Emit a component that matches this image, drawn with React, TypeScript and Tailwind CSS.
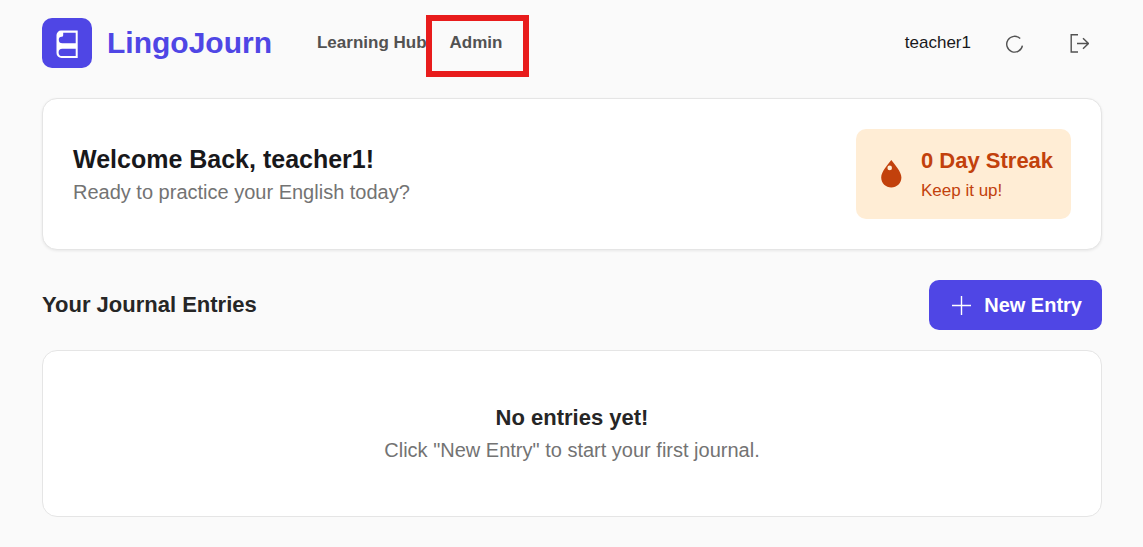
import React from "react";

function LogoIcon() {
  return (
    <svg viewBox="0 0 50 50" className="size-full" aria-hidden="true">
      <path
        fill="#fff"
        fillRule="evenodd"
        d="M19 12.6H35.7V40H19.5A5 5 0 0 1 14.5 35V17A4.5 4.5 0 0 1 19 12.6ZM21.2 14.8V17.2A1.6 1.6 0 0 1 19.6 18.8A3 3 0 0 0 16.8 21.8A3.5 3.5 0 0 0 20.3 25.3H33.7V14.8ZM20.3 30.7A3.7 3.7 0 0 0 20.3 38.1H33.7V30.7Z"
      />
    </svg>
  );
}

function DropIcon() {
  return (
    <svg viewBox="0 0 40 40" className="size-10 shrink-0" aria-hidden="true">
      <path
        fill="currentColor"
        fillRule="evenodd"
        d="M20.3 6C17 10.5 10.2 17.6 10.2 23.6C10.2 29.4 14.8 33.6 20.3 33.6S30.4 29.4 30.4 23.6C30.4 17.6 23.6 10.5 20.3 6ZM18.7 11.6A2.3 2.3 0 1 0 18.7 16.2A2.3 2.3 0 1 0 18.7 11.6Z"
      />
    </svg>
  );
}

function ThemeIcon() {
  return (
    <svg viewBox="0 0 20 20" className="size-5" fill="none" stroke="currentColor" strokeWidth="1.4" aria-hidden="true">
      <path d="M16.2 5.6A7.9 7.9 0 1 0 18.4 12.6" />
    </svg>
  );
}

function LogoutIcon() {
  return (
    <svg viewBox="0 0 20 20" className="size-5" fill="none" stroke="currentColor" strokeWidth="1.4" aria-hidden="true">
      <path d="M9 1.8H2.2V19H9M8 10.5H19.5M14 5.2L19.4 10.5L14 15.8" />
    </svg>
  );
}

function PlusIcon() {
  return (
    <svg viewBox="0 0 25 25" className="size-[25px]" fill="none" stroke="currentColor" strokeWidth="1.4" aria-hidden="true">
      <path d="M12.5 3V22M3 12.5H22" />
    </svg>
  );
}

export default function App() {
  return (
    <div className="min-h-screen bg-[#fafafa] pt-[18px] pr-[41px] pb-[30px] pl-[42px] font-['Liberation_Sans',Arial,sans-serif] text-[#18181b]">
      <header className="flex h-[50px] items-center justify-between">
        <div className="flex items-center">
          <a href="#home" className="flex items-center gap-[15px]">
            <span className="size-[50px] rounded-[10px] bg-[#4f46e5]">
              <LogoIcon />
            </span>
            <span className="text-[30px] leading-[38px] font-bold text-[#4f46e5]">LingoJourn</span>
          </a>
          <nav className="ml-[45px] flex items-center gap-[23px] text-[17px] leading-[24px] font-bold text-[#525252]">
            <a href="#hub">Learning Hub</a>
            <a href="#admin" className="relative">
              Admin
              <span className="pointer-events-none absolute -top-4 -right-[27px] -bottom-[22px] -left-6 border-6 border-[#e81c1c]" />
            </a>
          </nav>
        </div>
        <div className="flex items-center text-[17px] leading-[24px]">
          <span>teacher1</span>
          <div className="ml-[21px] flex gap-[21px] pr-px text-[#525252]">
            <button type="button" aria-label="Toggle theme" className="flex size-[44px] items-center justify-center">
              <ThemeIcon />
            </button>
            <button type="button" aria-label="Log out" className="flex size-[44px] items-center justify-center">
              <LogoutIcon />
            </button>
          </div>
        </div>
      </header>

      <main className="mt-[30px]">
        <section className="flex items-center justify-between rounded-[15px] border border-[#e5e5e5] bg-white p-[30px] shadow-[0_1px_3px_rgba(0,0,0,0.08)]">
          <div>
            <h1 className="text-[25px] leading-[35px] font-bold">Welcome Back, teacher1!</h1>
            <p className="text-[20px] leading-[30px] text-[#737373]">Ready to practice your English today?</p>
          </div>
          <div className="flex items-center gap-2.5 rounded-[10px] bg-[#ffedd5] p-[15px] text-[#c2410c]">
            <DropIcon />
            <div className="min-w-[135px]">
              <p className="text-[22px] leading-[34px] font-bold">0 Day Streak</p>
              <p className="text-[17px] leading-[26px]">Keep it up!</p>
            </div>
          </div>
        </section>

        <div className="mt-[30px] flex items-center justify-between">
          <h2 className="text-[22px] leading-[34px] font-bold text-[#262626]">Your Journal Entries</h2>
          <button type="button" className="flex h-[50px] items-center gap-2.5 rounded-[10px] bg-[#4f46e5] px-5 text-[20px] font-bold text-white">
            <PlusIcon />
            New Entry
          </button>
        </div>

        <section className="mt-5 rounded-[15px] border border-[#e5e5e5] bg-white px-[30px] pt-[50px] pb-[51px] text-center">
          <h3 className="text-[22px] leading-[34px] font-bold text-[#262626]">No entries yet!</h3>
          <p className="text-[20px] leading-[30px] text-[#737373]">Click "New Entry" to start your first journal.</p>
        </section>
      </main>
    </div>
  );
}
